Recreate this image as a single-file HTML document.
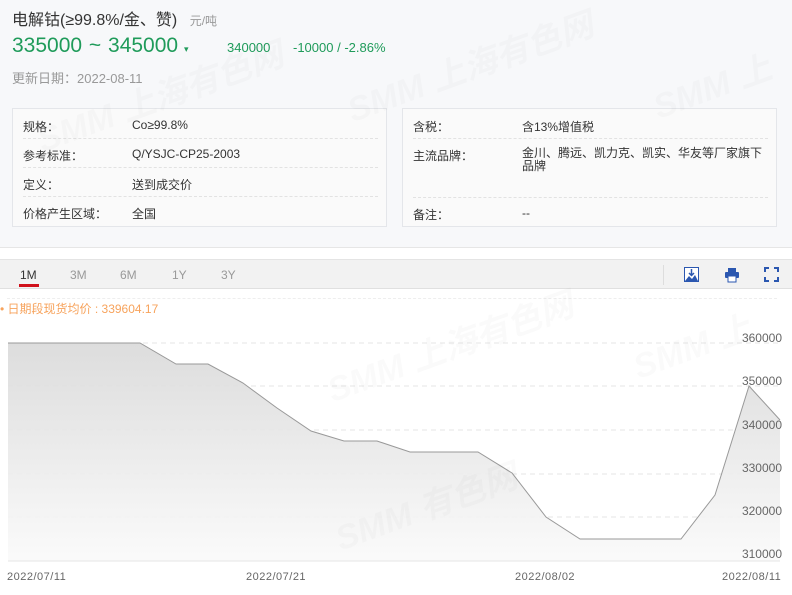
<!DOCTYPE html><html><head><meta charset="utf-8"><style>
*{margin:0;padding:0;box-sizing:border-box}
body{width:792px;height:595px;overflow:hidden;background:#fff;font-family:"Liberation Sans","Noto Sans CJK SC",sans-serif;position:relative;color:#333}
.a{position:absolute;white-space:nowrap}
.top{position:absolute;left:0;top:0;width:792px;height:248px;background:#f7f8fa;border-bottom:1px solid #e6e6e6}
.box{position:absolute;top:108px;height:119px;border:1px solid #e4e6ea;background:#fafafa}
.l{font-size:12px;color:#333}
.hr{position:absolute;height:0;border-top:1px dashed #e2e2e2}
.wm{position:absolute;font:italic bold 34px "Liberation Sans","Noto Sans CJK SC",sans-serif;color:rgba(0,0,0,0.018);transform:rotate(-20deg);white-space:nowrap}
</style></head><body>
<div class="top"></div>
<div class="a" style="left:12px;top:6px;font-size:16px;color:#333">电解钴(≥99.8%/金、赞) <span style="font-size:12px;color:#999;margin-left:8px">元/吨</span></div>
<div class="a" style="left:12px;top:34px;font-size:21px;color:#1f9b5a">335000 <span style="margin:0 1px">~</span> 345000 <span style="font-size:9px">▾</span></div>
<div class="a" style="left:227px;top:40px;font-size:13px;color:#1f9b5a">340000</div>
<div class="a" style="left:293px;top:40px;font-size:13px;color:#1f9b5a">-10000 / -2.86%</div>
<div class="a" style="left:12px;top:68px;font-size:13px;color:#999">更新日期：2022-08-11</div>
<div class="box" style="left:12px;width:375px">
<div class="a l" style="left:10px;top:9px">规格：</div><div class="a l" style="left:119px;top:9px">Co≥99.8%</div>
<div class="hr" style="left:10px;width:355px;top:29px"></div>
<div class="a l" style="left:10px;top:38px">参考标准：</div><div class="a l" style="left:119px;top:38px">Q/YSJC-CP25-2003</div>
<div class="hr" style="left:10px;width:355px;top:58px"></div>
<div class="a l" style="left:10px;top:67px">定义：</div><div class="a l" style="left:119px;top:67px">送到成交价</div>
<div class="hr" style="left:10px;width:355px;top:87px"></div>
<div class="a l" style="left:10px;top:96px">价格产生区域：</div><div class="a l" style="left:119px;top:96px">全国</div>
</div>
<div class="box" style="left:402px;width:375px">
<div class="a l" style="left:10px;top:9px">含税：</div><div class="a l" style="left:119px;top:9px">含13%增值税</div>
<div class="hr" style="left:10px;width:355px;top:29px"></div>
<div class="a l" style="left:10px;top:38px">主流品牌：</div><div class="a l" style="left:119px;top:38px;line-height:13px">金川、腾远、凯力克、凯实、华友等厂家旗下<br>品牌</div>
<div class="hr" style="left:10px;width:355px;top:88px"></div>
<div class="a l" style="left:10px;top:97px">备注：</div><div class="a l" style="left:119px;top:97px">--</div>
</div>
<div class="wm" style="left:30px;top:70px">SMM 上海有色网</div>
<div class="wm" style="left:340px;top:40px">SMM 上海有色网</div>
<div class="wm" style="left:650px;top:60px">SMM 上</div>
<div class="a" style="left:0;top:259px;width:792px;height:30px;background:#f2f2f2;border-top:1px solid #e4e4e4;border-bottom:1px solid #e0e0e0"></div>
<div class="a" style="left:20px;top:268px;font-size:12px;color:#333">1M</div>
<div class="a" style="left:19px;top:284px;width:20px;height:3px;background:#d0111b"></div>
<div class="a" style="left:70px;top:268px;font-size:12px;color:#999">3M</div>
<div class="a" style="left:120px;top:268px;font-size:12px;color:#999">6M</div>
<div class="a" style="left:172px;top:268px;font-size:12px;color:#999">1Y</div>
<div class="a" style="left:221px;top:268px;font-size:12px;color:#999">3Y</div>
<div class="a" style="left:663px;top:265px;width:1px;height:20px;background:#ddd"></div>
<svg class="a" style="left:684px;top:267px" width="15" height="15"><rect x="0.5" y="0.5" width="14" height="14" fill="#fff" stroke="#2b57b0"/><path d="M1 14L5 9L8 12L11 8L14 14Z" fill="#2b57b0"/><path d="M7.5 2V8M5 6L7.5 8.5L10 6" stroke="#2b57b0" stroke-width="1.5" fill="none"/></svg>
<svg class="a" style="left:724px;top:267px" width="16" height="16"><rect x="4" y="1" width="8" height="4" fill="#2b57b0"/><rect x="1" y="5" width="14" height="6" rx="1" fill="#2b57b0"/><rect x="4" y="9" width="8" height="6" fill="#fff" stroke="#2b57b0"/></svg>
<svg class="a" style="left:764px;top:267px" width="15" height="15" fill="none" stroke="#2b57b0" stroke-width="2"><path d="M1 5V1H5M10 1H14V5M14 10V14H10M5 14H1V10"/></svg>
<div class="hr" style="left:7px;width:770px;top:298px;border-color:#eee"></div>
<div class="a" style="left:0;top:300px;font-size:12px;color:#f7a35c">• 日期段现货均价 : 339604.17</div>
<svg class="a" style="left:0;top:0" width="792" height="595">
<defs><linearGradient id="g" x1="0" y1="0" x2="0" y2="1"><stop offset="0" stop-color="#d9d9d9"/><stop offset="1" stop-color="#fafafa"/></linearGradient></defs>
<g stroke="#e6e6e6" stroke-dasharray="5,4"><line x1="8" x2="780" y1="343" y2="343"/><line x1="8" x2="780" y1="386" y2="386"/><line x1="8" x2="780" y1="430" y2="430"/><line x1="8" x2="780" y1="474" y2="474"/><line x1="8" x2="780" y1="517" y2="517"/></g>
<path d="M8 343L140 343L176 364L208 364L243 383L277 408L311 431L344 441L377 441L410 452L478 452L512 473L546 517L580 539L681 539L715 495L749 386L780 420L780 561L8 561Z" fill="url(#g)" opacity="0.9"/>
<path d="M8 343L140 343L176 364L208 364L243 383L277 408L311 431L344 441L377 441L410 452L478 452L512 473L546 517L580 539L681 539L715 495L749 386L780 420" fill="none" stroke="#999" stroke-width="1"/>
<line x1="8" x2="780" y1="561" y2="561" stroke="#e6e6e6"/>
<g font-family="Liberation Sans,sans-serif" font-size="12" fill="#666" text-anchor="end"><text x="782" y="342">360000</text><text x="782" y="385">350000</text><text x="782" y="429">340000</text><text x="782" y="472">330000</text><text x="782" y="515">320000</text><text x="782" y="558">310000</text></g>
<g font-family="Liberation Sans,sans-serif" font-size="11" fill="#666" letter-spacing="0.5"><text x="7" y="580">2022/07/11</text><text x="246" y="580">2022/07/21</text><text x="515" y="580">2022/08/02</text><text x="722" y="580">2022/08/11</text></g>
</svg>
<div class="wm" style="left:320px;top:320px">SMM 上海有色网</div>
<div class="wm" style="left:630px;top:320px">SMM 上</div>
<div class="wm" style="left:330px;top:480px">SMM 有色网</div>
</body></html>
